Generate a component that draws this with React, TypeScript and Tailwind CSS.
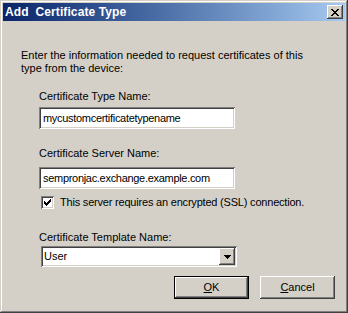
function CloseGlyph() {
  return (
    <svg width="8" height="7" viewBox="0 0 8 7" shapeRendering="crispEdges">
      <path
        d="M0 0h2v1H0zM6 0h2v1H6zM1 1h2v1H1zM5 1h2v1H5zM2 2h4v1H2zM3 3h2v1H3zM2 4h4v1H2zM1 5h2v1H1zM5 5h2v1H5zM0 6h2v1H0zM6 6h2v1H6z"
        fill="#000"
      />
    </svg>
  )
}

function CheckGlyph() {
  return (
    <svg width="7" height="7" viewBox="0 0 7 7" shapeRendering="crispEdges">
      <path d="M6 0h1v1H6zM5 1h2v1H5zM0 2h1v1H0zM4 2h3v1H4zM0 3h2v1H0zM3 3h3v1H3zM0 4h5v1H0zM1 5h3v1H1zM2 6h1v1H2z" fill="#000" />
    </svg>
  )
}

function ArrowGlyph() {
  return (
    <svg width="7" height="4" viewBox="0 0 7 4" shapeRendering="crispEdges">
      <path d="M0 0h7v1H0zM1 1h5v1H1zM2 2h3v1H2zM3 3h1v1H3z" fill="#000" />
    </svg>
  )
}

const raised =
  'shadow-[inset_-1px_-1px_#404040,inset_1px_1px_#fff,inset_-2px_-2px_#808080,inset_2px_2px_#d4d0c8]'
const sunken =
  'shadow-[inset_1px_1px_#808080,inset_-1px_-1px_#fff,inset_2px_2px_#404040,inset_-2px_-2px_#d4d0c8]'

function Field({ value }: { value: string }) {
  return (
    <div className={`ml-[18px] flex h-[22px] w-[196px] items-center bg-white pl-[4px] ${sunken}`}>
      <span className="leading-[13px] tracking-[-0.3px]">{value}</span>
    </div>
  )
}

function App() {
  return (
    <div
      className="flex h-[313px] w-[348px] flex-col bg-[#d4d0c8] p-[3px] text-[11px] text-black shadow-[inset_-1px_-1px_#404040,inset_1px_1px_#d4d0c8,inset_-2px_-2px_#808080,inset_2px_2px_#fff]"
      style={{ fontFamily: '"Liberation Sans", Arial, sans-serif' }}
    >
      <div className="flex h-[18px] items-center justify-between bg-gradient-to-r from-[#0a246a] to-[#a6caf0] pl-[2px] pr-[2px]">
        <span className="text-[12px] font-bold leading-[14px] tracking-[0.1px] text-white">Add&nbsp; Certificate Type</span>
        <div className={`flex h-[14px] w-[16px] items-center justify-center bg-[#d4d0c8] ${raised}`}>
          <CloseGlyph />
        </div>
      </div>

      <div className="flex flex-1 flex-col pl-[18px] pt-[28px]">
        <p className="leading-[13px]">
          Enter the information needed to request certificates of this
          <br />
          type from the device:
        </p>

        <div className="ml-[18px] mt-[15px] leading-[13px]">Certificate Type Name:</div>
        <div className="mt-[4px]">
          <Field value="mycustomcertificatetypename" />
        </div>

        <div className="ml-[18px] mt-[18px] leading-[13px]">Certificate Server Name:</div>
        <div className="mt-[7px]">
          <Field value="sempronjac.exchange.example.com" />
        </div>

        <div className="ml-[20px] mt-[7px] flex h-[13px] items-center gap-[6px]">
          <div className={`flex h-[13px] w-[13px] items-center justify-center bg-white ${sunken}`}>
            <CheckGlyph />
          </div>
          <span className="leading-[13px] tracking-[-0.2px]">This server requires an encrypted (SSL) connection.</span>
        </div>

        <div className="ml-[18px] mt-[22px] leading-[13px]">Certificate Template Name:</div>
        <div className={`ml-[20px] mt-[2px] flex h-[21px] w-[196px] items-center justify-between bg-white p-[2px] ${sunken}`}>
          <span className="pl-[1px] leading-[13px]">User</span>
          <div className={`flex h-[17px] w-[16px] items-center justify-center bg-[#d4d0c8] ${raised}`}>
            <ArrowGlyph />
          </div>
        </div>

        <div className="mt-[9px] flex justify-end gap-[11px] pr-[10px]">
          <div className="h-[23px] w-[75px] border border-black">
            <div className={`flex h-full items-center justify-center bg-[#d4d0c8] ${raised}`}>
              <span>
                <span className="underline">O</span>K
              </span>
            </div>
          </div>
          <div className={`flex h-[23px] w-[75px] items-center justify-center bg-[#d4d0c8] ${raised}`}>
            <span>
              <span className="underline">C</span>ancel
            </span>
          </div>
        </div>
      </div>
    </div>
  )
}

export default App
